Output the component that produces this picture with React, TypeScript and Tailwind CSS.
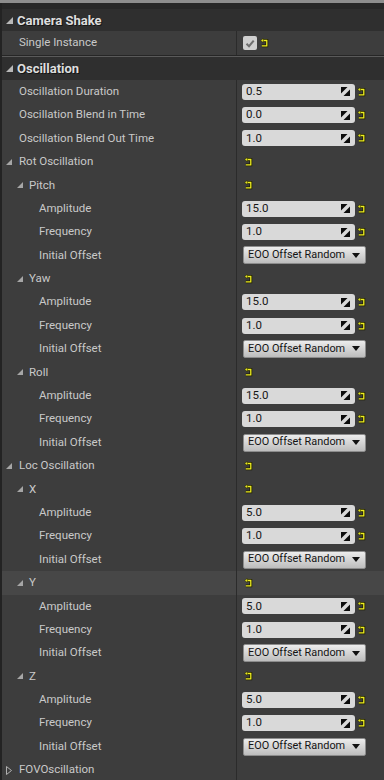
import type { ReactNode } from "react";

type Kind = "spin" | "combo" | "reset" | "none";
type Level = "leaf1" | "leaf2" | "group1" | "group2" | "closed1";

interface Row {
  label: string;
  level: Level;
  kind: Kind;
  value?: string;
  highlight?: boolean;
}

const OFFSET = "EOO Offset Random";

function axis(name: string, amp: string, highlight = false): Row[] {
  return [
    { label: name, level: "group2", kind: "reset", highlight },
    { label: "Amplitude", level: "leaf2", kind: "spin", value: amp },
    { label: "Frequency", level: "leaf2", kind: "spin", value: "1.0" },
    { label: "Initial Offset", level: "leaf2", kind: "combo", value: OFFSET },
  ];
}

const rows: Row[] = [
  { label: "Oscillation Duration", level: "leaf1", kind: "spin", value: "0.5" },
  { label: "Oscillation Blend in Time", level: "leaf1", kind: "spin", value: "0.0" },
  { label: "Oscillation Blend Out Time", level: "leaf1", kind: "spin", value: "1.0" },
  { label: "Rot Oscillation", level: "group1", kind: "reset" },
  ...axis("Pitch", "15.0"),
  ...axis("Yaw", "15.0"),
  ...axis("Roll", "15.0"),
  { label: "Loc Oscillation", level: "group1", kind: "reset" },
  ...axis("X", "5.0"),
  ...axis("Y", "5.0", true),
  ...axis("Z", "5.0"),
  { label: "FOVOscillation", level: "closed1", kind: "none" },
];

function OpenArrow({ size = 6, color = "#a6a6a6" }: { size?: number; color?: string }) {
  return (
    <svg width={size} height={size} viewBox="0 0 6 6">
      <polygon points="6,0 6,6 0,6" fill={color} />
    </svg>
  );
}

function ClosedArrow() {
  return (
    <svg width="6" height="9" viewBox="0 0 6 9">
      <polygon points="0.5,0.5 5.5,4.5 0.5,8.5" fill="none" stroke="#b0b0b0" strokeWidth="1" />
    </svg>
  );
}

// yellow "reset to default" arrow
function ResetIcon() {
  return (
    <svg width="9" height="10" viewBox="0 0 9 10" className="shrink-0">
      <path d="M3 2.5 H6.8 V7.8 H1.8" fill="none" stroke="#1c1c00" strokeWidth="2.8" />
      <path d="M3 2.5 H6.8 V7.8 H1.8" fill="none" stroke="#eeee22" strokeWidth="1.3" />
      <polygon points="0.6,2.5 3.4,0.4 3.4,4.6" fill="#eeee22" stroke="#1c1c00" strokeWidth="0.5" />
    </svg>
  );
}

function SpinArrows() {
  return (
    <svg width="9" height="9" viewBox="0 0 9 9">
      <polygon points="0,0 6.5,0 0,6.5" fill="#0c0c0c" />
      <polygon points="9,9 2.5,9 9,2.5" fill="#0c0c0c" />
    </svg>
  );
}

function SpinBox({ value }: { value: string }) {
  return (
    <div className="flex h-[16px] w-[113px] items-center justify-between rounded-[3px] bg-[#d9d9d9] pl-[4px] pr-[5px]">
      <span className="text-[11.5px] leading-none text-[#161616]">{value}</span>
      <SpinArrows />
    </div>
  );
}

function ComboBox({ value }: { value: string }) {
  return (
    <div className="ml-px flex h-[18px] w-[123px] items-center justify-between rounded-[2px] border border-[#8c8c8c] bg-gradient-to-b from-[#ececec] to-[#bdbdbd] pl-[4px] pr-[5px]">
      <span className="text-[10.9px] leading-none text-[#141414]">{value}</span>
      <svg width="8" height="5" viewBox="0 0 8 5">
        <polygon points="0,0 8,0 4,5" fill="#111" />
      </svg>
    </div>
  );
}

function LabelCell({ row }: { row: Row }) {
  let lead: ReactNode = null;
  let pad = "pl-[17px]";
  if (row.level === "leaf2") pad = "pl-[37px]";
  if (row.level === "group1" || row.level === "closed1") {
    pad = "pl-[4px]";
    lead = (
      <span className="flex w-[13px] items-center">
        {row.level === "closed1" ? <ClosedArrow /> : <OpenArrow />}
      </span>
    );
  }
  if (row.level === "group2") {
    pad = "pl-[15px]";
    lead = (
      <span className="flex w-[12px] items-center">
        <OpenArrow />
      </span>
    );
  }
  return (
    <div className={`flex w-[234px] shrink-0 items-center ${pad}`}>
      {lead}
      <span className="text-[11.5px] leading-none text-[#c9c9c9]">{row.label}</span>
    </div>
  );
}

function PropertyRow({ row }: { row: Row }) {
  return (
    <div className={`flex h-[23.4px] ${row.highlight ? "bg-[#474747]" : "bg-[#3d3d3d]"}`}>
      <LabelCell row={row} />
      <div className="w-px bg-[#2b2b2b]" />
      <div className="flex flex-1 items-center pl-[5px]">
        {row.kind === "spin" && (
          <>
            <SpinBox value={row.value!} />
            <span className="ml-[2px]">
              <ResetIcon />
            </span>
          </>
        )}
        {row.kind === "combo" && <ComboBox value={row.value!} />}
        {row.kind === "reset" && (
          <span className="ml-[2px]">
            <ResetIcon />
          </span>
        )}
      </div>
    </div>
  );
}

function CategoryHeader({ title, height }: { title: string; height: string }) {
  return (
    <div className={`flex ${height} items-center bg-[#2f2f2f] pl-[4px]`}>
      <span className="flex w-[11px] items-center">
        <OpenArrow size={7} color="#b8b8b8" />
      </span>
      <span className="text-[13px] font-bold leading-none text-[#dedede] [text-shadow:1px_1px_0_#151515]">
        {title}
      </span>
    </div>
  );
}

export default function App() {
  return (
    <div className="h-[780px] overflow-hidden bg-[#3d3d3d] font-['Roboto',sans-serif]">
      <div className="h-[3px] bg-[#8e8e8e]" />
      <div className="border-l-2 border-[#232323]">
        <div className="h-[6px] bg-[#282828]" />
        <CategoryHeader title="Camera Shake" height="h-[22px]" />
        <div className="flex h-[24px] bg-[#3d3d3d]">
          <div className="flex w-[234px] shrink-0 items-center pl-[17px]">
            <span className="text-[11.5px] leading-none text-[#c9c9c9]">Single Instance</span>
          </div>
          <div className="w-px bg-[#2b2b2b]" />
          <div className="flex flex-1 items-center pl-[5px]">
            <div className="ml-px flex h-[14px] w-[14px] items-center justify-center rounded-[2px] bg-[#cfcfcf]">
              <svg width="10" height="9" viewBox="0 0 10 9">
                <path d="M1.5 4.8 L4 7.2 L8.7 1.6" fill="none" stroke="#6e6e6e" strokeWidth="2" />
              </svg>
            </div>
            <span className="ml-[3px]">
              <ResetIcon />
            </span>
          </div>
        </div>
        <div className="h-px bg-[#262626]" />
        <div className="h-px bg-[#5a5a5a]" />
        <CategoryHeader title="Oscillation" height="h-[23px]" />
        {rows.map((row, i) => (
          <PropertyRow key={i} row={row} />
        ))}
      </div>
    </div>
  );
}
